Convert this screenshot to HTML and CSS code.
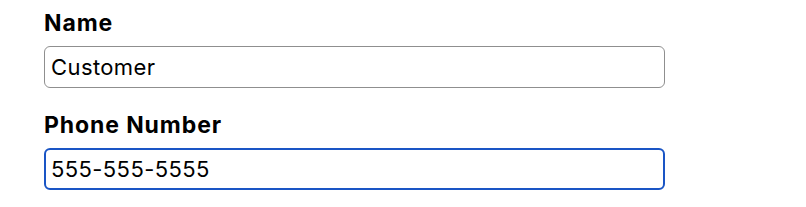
FILE: index.html
```html
<!DOCTYPE html>
<html lang="en">
<head>
    <meta charset="UTF-8">
    <title>Customer</title>
    <link rel="stylesheet" href="styles.css">
</head>
<body>
    <form class="customer-form">
        <div class="form-group">
            <label for="name">Name</label>
            <input type="text" id="name" value="Customer">
        </div>
        <div class="form-group">
            <label for="phone">Phone Number</label>
            <input type="tel" id="phone" class="focused" value="555-555-5555">
        </div>
    </form>
</body>
</html>
```

FILE: styles.css
```css
* {
    margin: 0;
    padding: 0;
    box-sizing: border-box;
}

body {
    font-family: Inter, "Liberation Sans", Arial, sans-serif;
    background-color: #fff;
    color: #000;
}

.customer-form {
    width: 621px;
    margin-left: 44px;
    padding-top: 10px;
}

.form-group {
    margin-bottom: 24px;
}

.form-group label {
    display: block;
    font-size: 23px;
    font-weight: bold;
    letter-spacing: 0.9px;
    line-height: 26px;
    margin-bottom: 10px;
}

.form-group input {
    display: block;
    width: 100%;
    height: 42px;
    padding: 0 6px;
    border: 1px solid #8f8f8f;
    border-radius: 6px;
    font-family: inherit;
    font-size: 22px;
    letter-spacing: 0.4px;
    color: #000;
    outline: none;
}

.form-group input.focused {
    border: 2px solid #1a55c5;
    padding: 0 5px;
}
```
